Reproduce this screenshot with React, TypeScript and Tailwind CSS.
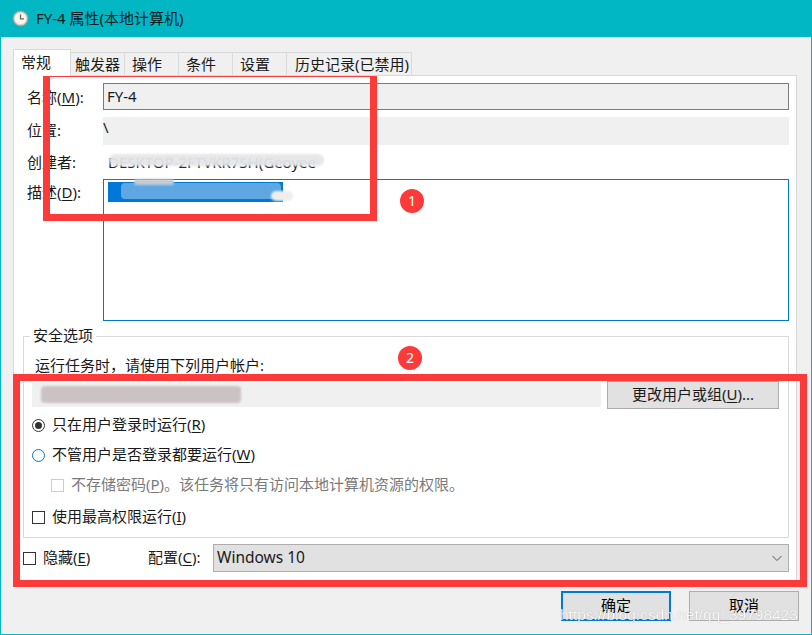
const font = { fontFamily: '"Noto Sans", "Noto Sans CJK SC", sans-serif' };

const tabs = [
  { label: "触发器", cls: "w-[54px] pl-[4px]" },
  { label: "操作", cls: "w-[54px] pl-[7px]" },
  { label: "条件", cls: "w-[54px] pl-[7px]" },
  { label: "设置", cls: "w-[54px] pl-[7px]" },
  { label: "历史记录(已禁用)", cls: "w-[125px] pl-[8px]" },
];

function Key({ children }: { children: string }) {
  return <span className="underline underline-offset-2">{children}</span>;
}

function ClockIcon() {
  return (
    <svg width="17" height="17" viewBox="0 0 17 17" className="shrink-0">
      <circle cx="8.5" cy="8.5" r="7.5" fill="#d8d4c8" stroke="#9a9a92" />
      <circle cx="8.5" cy="8.5" r="5.6" fill="#f7f6ef" />
      <path d="M8.5 4.5V8.8H12" fill="none" stroke="#6a6a62" strokeWidth="1.3" />
    </svg>
  );
}

function Radio({ checked }: { checked?: boolean }) {
  return (
    <span
      className={`flex h-[13px] w-[13px] shrink-0 items-center justify-center rounded-full border ${
        checked ? "border-[#333333]" : "border-[#0078d7]"
      }`}
    >
      {checked && <span className="h-[7px] w-[7px] rounded-full bg-[#333333]" />}
    </span>
  );
}

function Check({ disabled }: { disabled?: boolean }) {
  return (
    <span
      className={`block h-[13px] w-[13px] shrink-0 border ${
        disabled ? "border-[#cccccc]" : "border-[#333333]"
      }`}
    />
  );
}

function Btn({ children, primary }: { children: React.ReactNode; primary?: boolean }) {
  return (
    <button
      className={`h-[30px] w-[110px] bg-[#e1e1e1] pb-[2px] text-[15px] text-black ${
        primary ? "border-2 border-[#0078d7]" : "border border-[#adadad]"
      }`}
    >
      {children}
    </button>
  );
}

export default function App() {
  return (
    <div
      className="relative flex h-[635px] w-[812px] flex-col overflow-hidden border-x border-b border-[#00b7c3] bg-[#f0f0f0] text-[15px] leading-5 text-[#1a1a1a]"
      style={font}
    >
      {/* 标题栏 */}
      <div className="-mx-px flex h-[37px] shrink-0 items-center gap-[7px] bg-[#00b7c3] pl-[12px] text-[15px] text-[#0b1f22]">
        <ClockIcon />
        <span className="pb-[2px]">FY-4 属性(本地计算机)</span>
      </div>

      {/* 选项卡 */}
      <div className="relative z-10 mt-3 -mb-px flex h-[27px] items-end pl-[12px]">
        <div className="h-[27px] w-[58px] border-x border-t border-[#d9d9d9] bg-white pl-[7px] pt-[2px]">常规</div>
        {tabs.map((tab) => (
          <div
            key={tab.label}
            className={`h-[24px] ${tab.cls} whitespace-nowrap border-r border-t border-b border-[#d9d9d9] bg-[#f0f0f0] leading-[22px]`}
          >
            {tab.label}
          </div>
        ))}
      </div>

      {/* 常规页 */}
      <div className="ml-[12px] mr-[14px] flex flex-col border border-[#d9d9d9] bg-white pb-[8px] pl-[9px] pr-[7px] pt-[7px]">
        <div className="flex h-[27px] items-center">
          <span className="w-[80px] pl-[4px]">名称(<Key>M</Key>):</span>
          <div className="flex h-full flex-1 items-center border border-[#7a7a7a] bg-[#f0f0f0] pb-[2px] pl-[3px]">FY-4</div>
        </div>
        <div className="mt-[7px] flex h-[28px] items-center">
          <span className="w-[80px] pb-[2px] pl-[4px]">位置:</span>
          <div className="flex h-full flex-1 items-start bg-[#f0f0f0]">\</div>
        </div>
        <div className="mt-[7px] flex h-[22px] items-center">
          <span className="w-[80px] pb-[2px] pl-[4px]">创建者:</span>
          <span className="pb-[2px] pl-[5px]">DESKTOP-2FTVKR7SH(Geoyee</span>
        </div>
        <div className="mt-[5px] flex">
          <span className="w-[80px] pl-[4px] pt-[3px]">描述(<Key>D</Key>):</span>
          <div className="h-[142px] flex-1 border border-[#0078d7] bg-white pl-[4px] pt-[2px]">
            <div className="h-[20px] w-[175px] bg-[#0078d7]" />
          </div>
        </div>

        {/* 安全选项 */}
        <fieldset className="mt-[5px] border border-[#d9d9d9] pb-[10px] pl-[8px] pr-[9px]">
          <legend className="-ml-[2px] px-[3px] pb-[2px] leading-[18px]">安全选项</legend>
          <div className="mt-[10px] pb-[2px] pl-[3px] leading-[18px]">运行任务时，请使用下列用户帐户:</div>
          <div className="mt-[5px] flex h-[28px] items-center gap-[6px]">
            <div className="h-[24px] flex-1 bg-[#f0f0f0]" />
            <button className="h-full w-[172px] border border-[#adadad] bg-[#e1e1e1] pb-[2px] text-[15px]">
              更改用户或组(<Key>U</Key>)...
            </button>
          </div>
          <div className="mt-[6px] flex h-[20px] items-center gap-[7px]">
            <Radio checked />
            <span className="pb-[2px]">只在用户登录时运行(<Key>R</Key>)</span>
          </div>
          <div className="mt-[10px] flex h-[20px] items-center gap-[7px]">
            <Radio />
            <span className="pb-[2px]">不管用户是否登录都要运行(<Key>W</Key>)</span>
          </div>
          <div className="mt-[10px] flex h-[20px] items-center gap-[7px] pl-[19px] text-[#7a7a7a]">
            <Check disabled />
            <span className="pb-[2px]">不存储密码(<Key>P</Key>)。该任务将只有访问本地计算机资源的权限。</span>
          </div>
          <div className="mt-[12px] flex h-[20px] items-center gap-[7px]">
            <Check />
            <span className="pb-[2px]">使用最高权限运行(<Key>I</Key>)</span>
          </div>
        </fieldset>

        <div className="mt-[6px] flex h-[28px] items-center">
          <Check />
          <span className="ml-[7px] w-[105px] pb-[2px]">隐藏(<Key>E</Key>)</span>
          <span className="w-[65px] pb-[2px]">配置(<Key>C</Key>):</span>
          <div className="flex h-full flex-1 items-center justify-between border border-[#adadad] bg-[#e1e1e1] pl-[3px] pr-[4px] text-[15.5px]">
            <span className="pb-[2px]">Windows 10</span>
            <svg width="12" height="12" viewBox="0 0 12 12" className="mr-[1px]">
              <path d="M1.5 4L6 8.5L10.5 4" fill="none" stroke="#555555" strokeWidth="1" />
            </svg>
          </div>
        </div>
      </div>

      {/* 底部按钮 */}
      <div className="mt-[10px] flex justify-end gap-[18px] pr-[12px]">
        <Btn primary>确定</Btn>
        <Btn>取消</Btn>
      </div>

      {/* 打码 */}
      <div className="absolute left-[108px] top-[154px] h-[12px] w-[215px] rounded-full bg-[#e4e6e8] opacity-95 blur-[1px]" />
      <div className="absolute left-[120px] top-[183px] h-[16px] w-[160px] rounded-sm bg-[#5ea7e3]" />
      <div className="absolute left-[133px] top-[179px] h-[6px] w-[40px] rounded-full bg-[#c4ccd2] blur-[1px]" />
      <div className="absolute left-[270px] top-[191px] h-[10px] w-[22px] rounded-full bg-[#eeeeee] blur-[1px]" />
      <div className="absolute left-[40px] top-[386px] h-[17px] w-[200px] rounded-sm bg-[#cbc3c3] blur-[1px]" />

      {/* 红框标注 */}
      <div className="absolute left-[42px] top-[70px] h-[151px] w-[334px] border-[7px] border-[#fc3a3a]" />
      <div className="absolute left-[12px] top-[374px] h-[213px] w-[794px] border-[7px] border-[#fc3a3a]" />
      <div className="absolute left-[399px] top-[189px] flex h-[24px] w-[24px] items-center justify-center rounded-full bg-[#fc3a3a] text-[14px] text-white">1</div>
      <div className="absolute left-[397px] top-[346px] flex h-[24px] w-[24px] items-center justify-center rounded-full bg-[#fc3a3a] text-[14px] text-white">2</div>

      {/* 水印 */}
      <div
        className="absolute left-[559px] top-[605px] whitespace-nowrap text-[15.5px] text-white opacity-80 [text-shadow:0_0_1px_#8a8a8a]"
        style={{ fontFamily: '"Liberation Sans", sans-serif' }}
      >
        https://blog.csdn.net/qq_39798423
      </div>
    </div>
  );
}
